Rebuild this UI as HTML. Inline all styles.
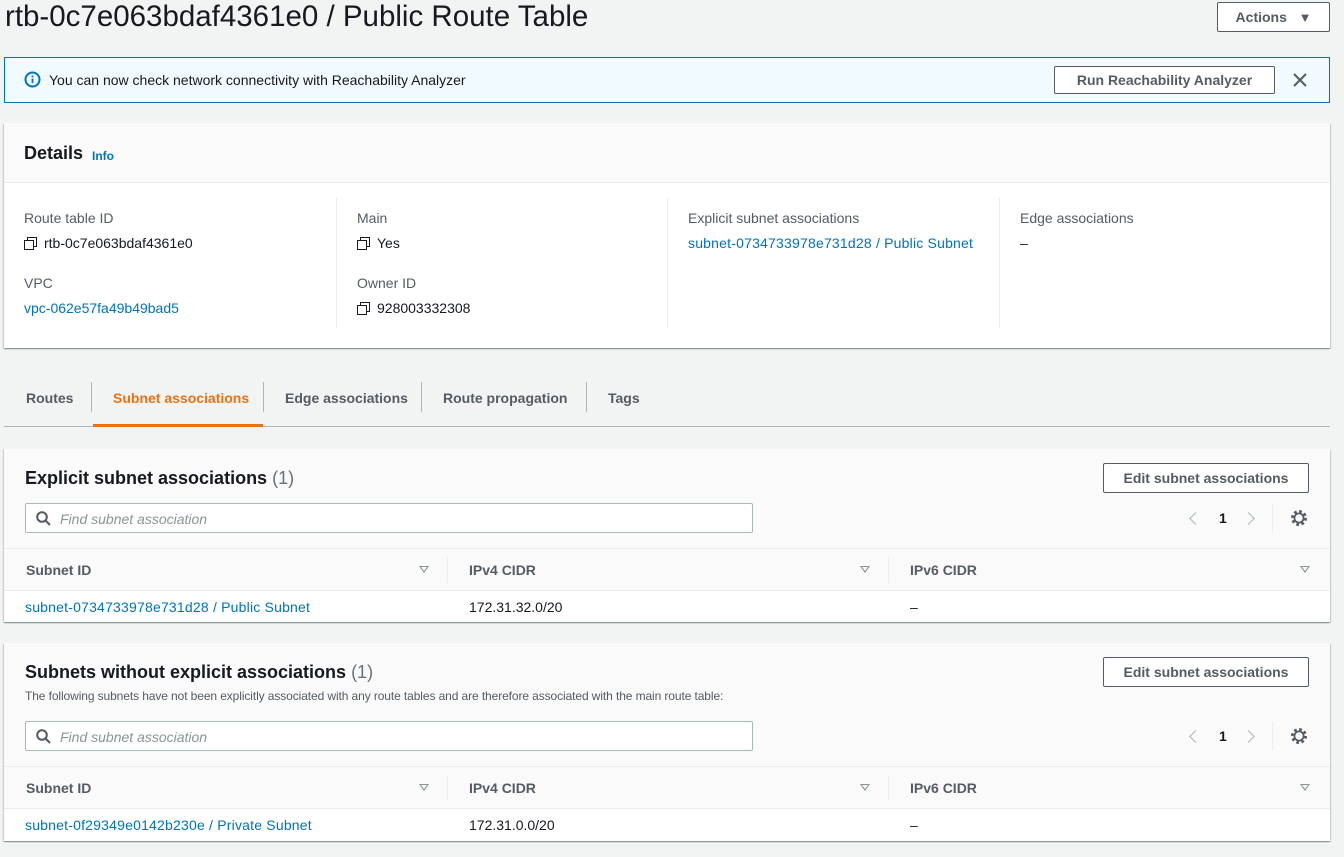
<!DOCTYPE html>
<html><head><meta charset="utf-8"><style>
*{box-sizing:border-box;margin:0;padding:0}
body{width:1344px;height:857px;background:#f2f3f3;font-family:"Liberation Sans",sans-serif;color:#16191f;font-size:14px;position:relative;overflow:hidden}
.abs{position:absolute}
.btn{position:absolute;border:1px solid #545b64;background:#fff;color:#545b64;font-weight:bold;font-size:14px;border-radius:2px;display:flex;align-items:center;justify-content:center}
.card{position:absolute;left:4px;width:1326px;background:#fff;box-shadow:0 1px 1px 0 rgba(0,28,36,.3),1px 1px 1px 0 rgba(0,28,36,.15),-1px 1px 1px 0 rgba(0,28,36,.15)}
.hdr{background:#fafafa;border-bottom:1px solid #eaeded}
.lbl{color:#545b64;font-size:14px}
a,.link{color:#0073bb;text-decoration:none}
.copy{display:inline-block;width:12px;height:12px;position:relative;margin-right:8px;vertical-align:-1px}
.copy:before{content:"";position:absolute;left:3px;top:0;width:8px;height:8px;border:1.5px solid #16191f}
.copy:after{content:"";position:absolute;left:0;top:3px;width:8px;height:8px;border:1.5px solid #16191f;background:#fff}
.vd{position:absolute;top:75px;width:1px;height:130px;background:#eaeded}
.search{position:absolute;left:21px;width:728px;height:30px;border:1px solid #aab7b8;border-radius:2px;background:#fff}
.search span{position:absolute;left:34px;top:7px;color:#879596;font-style:italic;font-size:14px}
.th{position:absolute;left:0;width:1326px;height:43px;background:#fafafa;border-top:1px solid #eaeded;border-bottom:1px solid #eaeded}
.th div{position:absolute;top:13px;font-weight:bold;color:#545b64}
.tri{position:absolute;top:17px;width:0;height:0;border-left:5px solid transparent;border-right:5px solid transparent;border-top:7px solid #879596}
.tri:after{content:"";position:absolute;left:-3px;top:-6px;border-left:3px solid transparent;border-right:3px solid transparent;border-top:4px solid #fafafa}
.sep{position:absolute;top:8px;width:1px;height:26px;background:#eaeded}
.pg{position:absolute;color:#16191f;font-weight:bold}
.chev{position:absolute;width:9px;height:9px;border-left:1.5px solid #aab7b8;border-bottom:1.5px solid #aab7b8}
</style></head><body>
<div class="abs" style="left:5px;top:0px;font-size:29.5px;color:#16191f">rtb-0c7e063bdaf4361e0 / Public Route Table</div>
<div class="btn" style="left:1217px;top:2px;width:113px;height:30px">Actions&nbsp;&nbsp;&nbsp;<span style="font-size:13px;color:#545b64">▼</span></div>

<div class="abs" style="left:4px;top:57px;width:1326px;height:46px;background:#f1faff;border:1px solid #0073bb"></div>
<svg class="abs" style="left:24px;top:71px" width="17" height="17" viewBox="0 0 17 17"><circle cx="8.5" cy="8.5" r="7" fill="none" stroke="#0073bb" stroke-width="2"/><rect x="7.6" y="7.5" width="1.8" height="4.5" fill="#0073bb"/><rect x="7.6" y="4.5" width="1.8" height="1.8" fill="#0073bb"/></svg>
<div class="abs" style="left:49px;top:72px;font-size:14px">You can now check network connectivity with Reachability Analyzer</div>
<div class="btn" style="left:1054px;top:66px;width:221px;height:28px">Run Reachability Analyzer</div>
<svg class="abs" style="left:1292px;top:72px" width="16" height="16" viewBox="0 0 16 16"><path d="M2 2L14 14M14 2L2 14" stroke="#545b64" stroke-width="2"/></svg>

<div class="card" style="top:123px;height:225px">
 <div class="hdr" style="height:60px;position:relative"><span class="abs" style="left:20px;top:20px;font-size:18px;font-weight:bold">Details</span><span class="abs link" style="left:88px;top:26px;font-size:12px;font-weight:bold">Info</span></div>
 <div class="vd" style="left:332px"></div><div class="vd" style="left:663px"></div><div class="vd" style="left:995px"></div>
 <div class="abs lbl" style="left:20px;top:87px">Route table ID</div>
 <div class="abs" style="left:20px;top:112px"><span class="copy"></span>rtb-0c7e063bdaf4361e0</div>
 <div class="abs lbl" style="left:20px;top:152px">VPC</div>
 <div class="abs link" style="left:20px;top:177px">vpc-062e57fa49b49bad5</div>
 <div class="abs lbl" style="left:353px;top:87px">Main</div>
 <div class="abs" style="left:353px;top:112px"><span class="copy"></span>Yes</div>
 <div class="abs lbl" style="left:353px;top:152px">Owner ID</div>
 <div class="abs" style="left:353px;top:177px"><span class="copy"></span>928003332308</div>
 <div class="abs lbl" style="left:684px;top:87px">Explicit subnet associations</div>
 <div class="abs link" style="left:684px;top:112px;letter-spacing:0.2px">subnet-0734733978e731d28 / Public Subnet</div>
 <div class="abs lbl" style="left:1016px;top:87px">Edge associations</div>
 <div class="abs" style="left:1016px;top:112px">–</div>
</div>

<div class="abs" style="left:4px;top:426px;width:1326px;height:1px;background:#aab7b8"></div>
<div class="abs" style="left:93px;top:424px;width:170px;height:3px;background:#ec7211"></div>
<div class="abs" style="left:26px;top:390px;font-weight:bold;color:#545b64">Routes</div>
<div class="abs" style="left:91px;top:382px;width:1px;height:30px;background:#aab7b8"></div>
<div class="abs" style="left:113px;top:390px;font-weight:bold;color:#ec7211">Subnet associations</div>
<div class="abs" style="left:263px;top:382px;width:1px;height:30px;background:#aab7b8"></div>
<div class="abs" style="left:285px;top:390px;font-weight:bold;color:#545b64">Edge associations</div>
<div class="abs" style="left:421px;top:382px;width:1px;height:30px;background:#aab7b8"></div>
<div class="abs" style="left:443px;top:390px;font-weight:bold;color:#545b64">Route propagation</div>
<div class="abs" style="left:586px;top:382px;width:1px;height:30px;background:#aab7b8"></div>
<div class="abs" style="left:608px;top:390px;font-weight:bold;color:#545b64">Tags</div>

<div class="card" style="top:449px;height:173px;background:#fafafa">
 <div class="abs" style="left:21px;top:19px;font-size:18px;font-weight:bold">Explicit subnet associations <span style="font-weight:normal;color:#687078">(1)</span></div>
 <div class="btn" style="left:1099px;top:14px;width:206px;height:30px">Edit subnet associations</div>
 <div class="search" style="top:54px"><svg class="abs" style="left:10px;top:7px" width="15" height="15" viewBox="0 0 15 15"><circle cx="6" cy="6" r="4.8" fill="none" stroke="#545b64" stroke-width="2"/><line x1="9.5" y1="9.5" x2="14" y2="14" stroke="#545b64" stroke-width="2"/></svg><span>Find subnet association</span></div>
 <div class="chev" style="left:1187px;top:65px;transform:rotate(45deg)"></div>
 <div class="pg" style="left:1215px;top:61px">1</div>
 <div class="chev" style="left:1240px;top:65px;transform:rotate(-135deg)"></div>
 <div class="abs" style="left:1268px;top:55px;width:1px;height:28px;background:#eaeded"></div>
 <svg class="abs" style="left:1286px;top:60px" width="18" height="18" viewBox="0 0 18 18"><circle cx="9" cy="9" r="6.5" fill="none" stroke="#545b64" stroke-width="3" stroke-dasharray="2.6 2.5"/><circle cx="9" cy="9" r="4.6" fill="none" stroke="#545b64" stroke-width="1.8"/></svg>
 <div class="th" style="top:99px"><div style="left:22px">Subnet ID</div><span class="tri" style="left:415px"></span><span class="sep" style="left:443px"></span><div style="left:465px">IPv4 CIDR</div><span class="tri" style="left:856px"></span><span class="sep" style="left:884px"></span><div style="left:906px">IPv6 CIDR</div><span class="tri" style="left:1296px"></span></div>
 <div class="abs" style="left:0;top:142px;width:1326px;height:31px;background:#fff"></div>
 <div class="abs link" style="left:21px;top:150px;letter-spacing:0.2px">subnet-0734733978e731d28 / Public Subnet</div>
 <div class="abs" style="left:465px;top:150px">172.31.32.0/20</div>
 <div class="abs" style="left:906px;top:150px">–</div>
</div>

<div class="card" style="top:643px;height:198px;background:#fafafa">
 <div class="abs" style="left:21px;top:19px;font-size:18px;font-weight:bold">Subnets without explicit associations <span style="font-weight:normal;color:#687078">(1)</span></div>
 <div class="abs" style="left:21px;top:46px;font-size:12px;color:#545b64;letter-spacing:-0.1px">The following subnets have not been explicitly associated with any route tables and are therefore associated with the main route table:</div>
 <div class="btn" style="left:1099px;top:14px;width:206px;height:30px">Edit subnet associations</div>
 <div class="search" style="top:78px"><svg class="abs" style="left:10px;top:7px" width="15" height="15" viewBox="0 0 15 15"><circle cx="6" cy="6" r="4.8" fill="none" stroke="#545b64" stroke-width="2"/><line x1="9.5" y1="9.5" x2="14" y2="14" stroke="#545b64" stroke-width="2"/></svg><span>Find subnet association</span></div>
 <div class="chev" style="left:1187px;top:89px;transform:rotate(45deg)"></div>
 <div class="pg" style="left:1215px;top:85px">1</div>
 <div class="chev" style="left:1240px;top:89px;transform:rotate(-135deg)"></div>
 <div class="abs" style="left:1268px;top:79px;width:1px;height:28px;background:#eaeded"></div>
 <svg class="abs" style="left:1286px;top:84px" width="18" height="18" viewBox="0 0 18 18"><circle cx="9" cy="9" r="6.5" fill="none" stroke="#545b64" stroke-width="3" stroke-dasharray="2.6 2.5"/><circle cx="9" cy="9" r="4.6" fill="none" stroke="#545b64" stroke-width="1.8"/></svg>
 <div class="th" style="top:123px"><div style="left:22px">Subnet ID</div><span class="tri" style="left:415px"></span><span class="sep" style="left:443px"></span><div style="left:465px">IPv4 CIDR</div><span class="tri" style="left:856px"></span><span class="sep" style="left:884px"></span><div style="left:906px">IPv6 CIDR</div><span class="tri" style="left:1296px"></span></div>
 <div class="abs" style="left:0;top:166px;width:1326px;height:32px;background:#fff"></div>
 <div class="abs link" style="left:21px;top:174px;letter-spacing:0.2px">subnet-0f29349e0142b230e / Private Subnet</div>
 <div class="abs" style="left:465px;top:174px">172.31.0.0/20</div>
 <div class="abs" style="left:906px;top:174px">–</div>
</div>
</body></html>
